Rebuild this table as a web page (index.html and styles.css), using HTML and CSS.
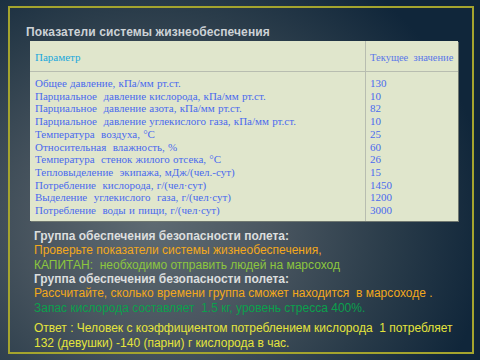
FILE: index.html
```html
<!DOCTYPE html>
<html lang="ru">
<head>
<meta charset="utf-8">
<link rel="stylesheet" href="styles.css">
</head>
<body>
<div class="frame">
  <h1 class="title">Показатели системы жизнеобеспечения</h1>
  <div class="table">
    <div class="head">
      <div class="c1 hd-param">Параметр</div>
      <div class="c2 hd-val">Текущее&nbsp; значение</div>
    </div>
    <div class="body">
      <div class="c1 names">
        <div>Общее давление, кПа/мм рт.ст.</div>
        <div>Парциальное&nbsp; давление кислорода, кПа/мм рт.ст.</div>
        <div>Парциальное&nbsp; давление азота, кПа/мм рт.ст.</div>
        <div>Парциальное&nbsp; давление углекислого газа, кПа/мм рт.ст.</div>
        <div>Температура&nbsp; воздуха, °С</div>
        <div>Относительная&nbsp; влажность, %</div>
        <div>Температура&nbsp; стенок жилого отсека, °С</div>
        <div>Тепловыделение&nbsp; экипажа, мДж/(чел.-сут)</div>
        <div>Потребление&nbsp; кислорода, г/(чел·сут)</div>
        <div>Выделение&nbsp; углекислого&nbsp; газа, г/(чел·сут)</div>
        <div>Потребление&nbsp; воды и пищи, г/(чел·сут)</div>
      </div>
      <div class="c2 vals">
        <div>130</div><div>10</div><div>82</div><div>10</div><div>25</div><div>60</div><div>26</div><div>15</div><div>1450</div><div>1200</div><div>3000</div>
      </div>
    </div>
  </div>
  <div class="notes">
    <p class="b">Группа обеспечения безопасности полета:</p>
    <p class="orange">Проверьте показатели системы жизнеобеспечения,</p>
    <p class="lgreen">КАПИТАН:&nbsp; необходимо отправить людей на марсоход</p>
    <p class="b">Группа обеспечения безопасности полета:</p>
    <p class="orange">Рассчитайте, сколько времени группа сможет находится&nbsp; в марсоходе .</p>
    <p class="green">Запас кислорода составляет&nbsp; 1.5 кг, уровень стресса 400%.</p>
  </div>
  <div class="answer">
    <p>Ответ : Человек с коэффициентом потреблением кислорода&nbsp; 1 потребляет</p>
    <p>132 (девушки) -140 (парни) г кислорода в час.</p>
  </div>
</div>
</body>
</html>
```

FILE: styles.css
```css
html, body {
  margin: 0;
  padding: 0;
}
body {
  width: 480px;
  height: 360px;
  overflow: hidden;
  background: radial-gradient(ellipse 70% 85% at 32% 62%, #5e6a72 0%, #4a5660 35%, #2a3c4a 70%, #10263a 100%);
  font-family: "Liberation Sans", Arial, sans-serif;
}
.frame {
  box-sizing: border-box;
  margin: 6px 0 0 8px;
  width: 466px;
  height: 348px;
  border: 2px solid #a4a42e;
  padding: 16px 0 0 16px;
}
.title {
  margin: 0;
  font-size: 12px;
  font-weight: bold;
  color: #cdd2d6;
  line-height: 16px;
  letter-spacing: 0.1px;
}
.table {
  margin: 1px 0 0 4px;
  width: 428px;
  background: #e0e6cc;
  box-shadow: 1px 1px 0 #6f7770;
  font-family: "Liberation Serif", "Times New Roman", serif;
  font-size: 11px;
  word-spacing: 0.5px;
}
.head, .body {
  display: flex;
}
.head {
  height: 31px;
  border-bottom: 1px solid #b8bdb0;
  box-sizing: border-box;
}
.c1 {
  box-sizing: border-box;
  width: 336px;
  flex: none;
  border-right: 1px solid #b8bdb0;
  padding-left: 5px;
}
.c2 {
  flex: 1;
  padding-left: 4px;
  white-space: nowrap;
}
.head .c1, .head .c2 {
  display: flex;
  align-items: center;
  padding-top: 2px;
}
.hd-param { color: #1aa8dc; }
.hd-val { color: #5b78e8; font-size: 10.5px; word-spacing: 0; }
.body {
  color: #4a6aee;
  line-height: 12.7px;
}
.names, .vals {
  padding-top: 5px;
  padding-bottom: 4px;
}
.names div { white-space: nowrap; }
.notes {
  margin: 8px 0 0 8px;
  font-size: 12px;
  line-height: 14.4px;
}
.notes p, .answer p {
  margin: 0;
  white-space: nowrap;
}
.b { font-weight: bold; color: #dcdede; }
.orange { color: #f2a81c; }
.lgreen { color: #8cc63e; }
.green { color: #0aa04c; }
.answer {
  margin: 6px 0 0 8px;
  font-size: 12px;
  line-height: 14.6px;
  color: #e4e43c;
}
```
